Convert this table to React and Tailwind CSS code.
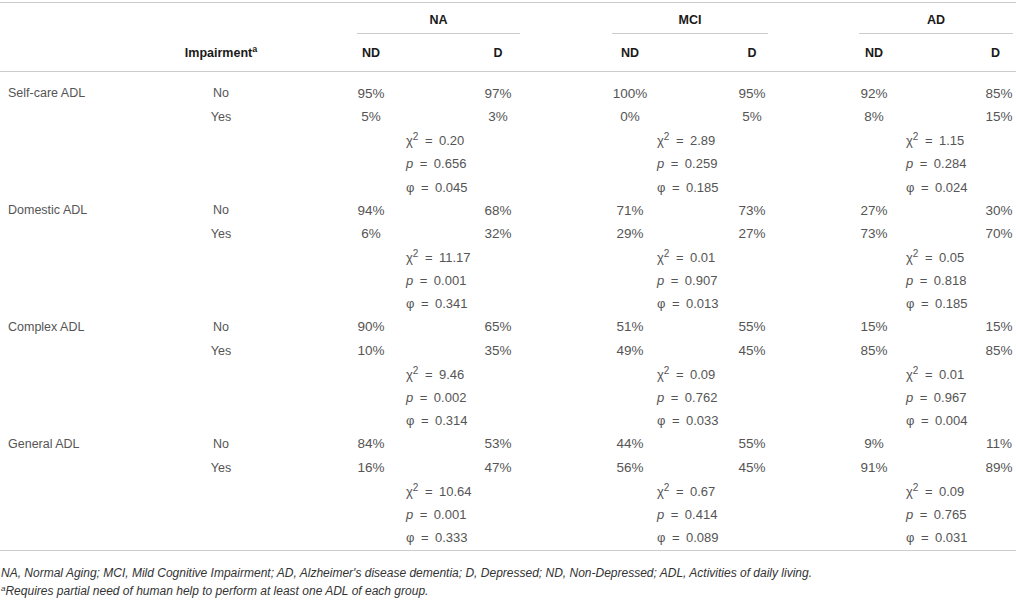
import React from "react";

const groups = [
  { key: "NA", start: "col-start-4", pad: "pl-[65px]" },
  { key: "MCI", start: "col-start-8", pad: "pl-[57px]" },
  { key: "AD", start: "col-start-12", pad: "pl-[62px]" },
];

const ndCols = ["col-start-4", "col-start-8", "col-start-12"];
const dCols = ["col-start-6", "col-start-10", "col-start-14"];

const data = [
  {
    label: "Self-care ADL",
    no: [["95%", "97%"], ["100%", "95%"], ["92%", "85%"]],
    yes: [["5%", "3%"], ["0%", "5%"], ["8%", "15%"]],
    stats: [["0.20", "0.656", "0.045"], ["2.89", "0.259", "0.185"], ["1.15", "0.284", "0.024"]],
  },
  {
    label: "Domestic ADL",
    no: [["94%", "68%"], ["71%", "73%"], ["27%", "30%"]],
    yes: [["6%", "32%"], ["29%", "27%"], ["73%", "70%"]],
    stats: [["11.17", "0.001", "0.341"], ["0.01", "0.907", "0.013"], ["0.05", "0.818", "0.185"]],
  },
  {
    label: "Complex ADL",
    no: [["90%", "65%"], ["51%", "55%"], ["15%", "15%"]],
    yes: [["10%", "35%"], ["49%", "45%"], ["85%", "85%"]],
    stats: [["9.46", "0.002", "0.314"], ["0.09", "0.762", "0.033"], ["0.01", "0.967", "0.004"]],
  },
  {
    label: "General ADL",
    no: [["84%", "53%"], ["44%", "55%"], ["9%", "11%"]],
    yes: [["16%", "47%"], ["56%", "45%"], ["91%", "89%"]],
    stats: [["10.64", "0.001", "0.333"], ["0.67", "0.414", "0.089"], ["0.09", "0.765", "0.031"]],
  },
];

const grid =
  "grid grid-cols-[160px_122px_59px_60px_67px_60px_72px_60px_62px_60px_62px_60px_71px_41px]";

// math-style spacing round the equals sign
const EQ = "\u2002=\u2002";

function ValueRow({ label, impairment, values }) {
  return (
    <>
      <div className="col-start-1 h-[23.4px] flex items-center pl-2">{label}</div>
      <div className="col-start-2 h-[23.4px] flex items-center justify-center">
        {impairment}
      </div>
      {values.map(([nd, d], i) => (
        <React.Fragment key={i}>
          <div className={`${ndCols[i]} h-[23.4px] flex items-center justify-center text-[13.5px]`}>
            {nd}
          </div>
          <div
            className={`${dCols[i]} h-[23.4px] flex items-center justify-center text-[13.5px] ${
              i === 2 ? "pl-[7px]" : ""
            }`}
          >
            {d}
          </div>
        </React.Fragment>
      ))}
    </>
  );
}

function StatRow({ stats, kind }) {
  return (
    <>
      {groups.map((g, i) => (
        <div
          key={g.key}
          className={`${g.start} col-span-3 h-[23.4px] flex items-center ${g.pad} whitespace-nowrap text-[13px]`}
        >
          {kind === 0 && (
            <span>
              χ<sup className="text-[10px] -top-[5px]">2</sup>
              {EQ}
              {stats[i][0]}
            </span>
          )}
          {kind === 1 && (
            <span>
              <i>p</i>
              {EQ}
              {stats[i][1]}
            </span>
          )}
          {kind === 2 && (
            <span>
              φ{EQ}
              {stats[i][2]}
            </span>
          )}
        </div>
      ))}
    </>
  );
}

export default function App() {
  return (
    <div className="w-[1016px] h-[600px] bg-white pt-[2px] font-['Liberation_Sans',Arial,sans-serif] text-[12.5px] text-[#555555] overflow-hidden">
      {/* Header */}
      <div className={`${grid} border-t border-b border-[#cccccc] text-[#1a1a1a] font-bold`}>
        {groups.map((g, i) => (
          <div key={g.key} className={`${g.start} col-span-3 row-start-1 h-[32px]`}>
            <div
              className={`h-[31px] pt-[4px] flex items-center justify-center border-b border-[#cccccc] ${
                i === 0 ? "ml-[16px] mr-[8px]" : i === 1 ? "ml-[12px] mr-[14px]" : "ml-[15px] mr-[3px]"
              }`}
            >
              {g.key}
            </div>
          </div>
        ))}
        <div className="col-start-2 row-start-2 h-[36px] flex items-center justify-center">
          <span>
            Impairment<sup className="text-[9px] -top-[5px]">a</sup>
          </span>
        </div>
        {ndCols.map((c, i) => (
          <React.Fragment key={c}>
            <div className={`${c} row-start-2 h-[36px] flex items-center justify-center`}>ND</div>
            <div className={`${dCols[i]} row-start-2 h-[36px] flex items-center justify-center`}>D</div>
          </React.Fragment>
        ))}
      </div>

      {/* Body */}
      <div className={`${grid} pt-[10px] border-b border-[#cccccc]`}>
        {data.map((row) => (
          <React.Fragment key={row.label}>
            <ValueRow label={row.label} impairment="No" values={row.no} />
            <ValueRow label="" impairment="Yes" values={row.yes} />
            <StatRow stats={row.stats} kind={0} />
            <StatRow stats={row.stats} kind={1} />
            <StatRow stats={row.stats} kind={2} />
          </React.Fragment>
        ))}
      </div>

      {/* Footnotes */}
      <div className="pt-[13px] pl-[1px] italic text-[12px] leading-[18px] text-[#333333]">
        <p>
          NA, Normal Aging; MCI, Mild Cognitive Impairment; AD, Alzheimer's disease dementia; D,
          Depressed; ND, Non-Depressed; ADL, Activities of daily living.
        </p>
        <p>
          <sup className="text-[8px] -top-[4px]">a</sup>Requires partial need of human help to perform at least
          one ADL of each group.
        </p>
      </div>
    </div>
  );
}
